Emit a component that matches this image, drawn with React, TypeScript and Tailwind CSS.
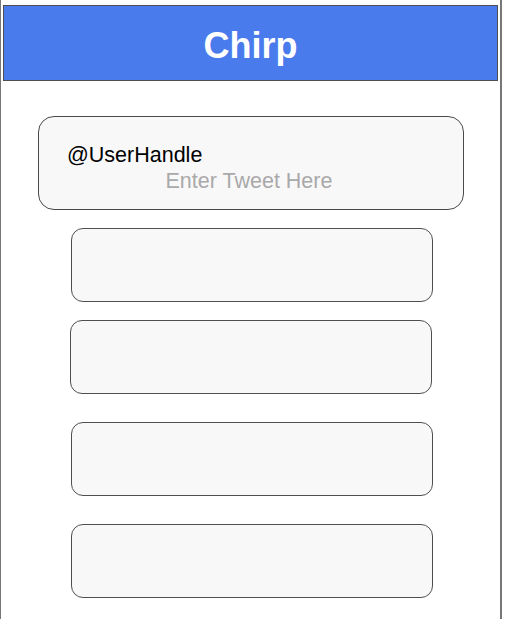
export default function App() {
  const cards = [
    { ml: "ml-[70px]", mt: "mt-[18px]" },
    { ml: "ml-[69px]", mt: "mt-[18px]" },
    { ml: "ml-[70px]", mt: "mt-[28px]" },
    { ml: "ml-[70px]", mt: "mt-[28px]" },
  ];
  return (
    <div
      className="w-[502px] h-[619px] bg-white border-l border-r-2 border-[#777777] overflow-hidden flex flex-col"
      style={{ fontFamily: '"Liberation Sans", Arial, sans-serif' }}
    >
      <div className="mt-[5px] ml-[2px] w-[495px] h-[76px] shrink-0 bg-[#4a7bec] border border-[#4f4f4f] flex items-center justify-center pt-[5px]">
        <span className="text-white font-bold text-[36px] leading-none">Chirp</span>
      </div>
      <div className="mt-[35px] ml-[37px] w-[426px] h-[94px] shrink-0 bg-[#f9f8f9] border border-[#4a4a4a] rounded-[16px] pt-[25px]">
        <div className="pl-[28px] text-[21.5px] leading-[26px] text-black">@UserHandle</div>
        <div className="pr-[4px] text-center text-[21.5px] leading-[26px] text-[#a9a9a9]">Enter Tweet Here</div>
      </div>
      {cards.map((c, i) => (
        <div
          key={i}
          className={`${c.ml} ${c.mt} w-[362px] h-[74px] shrink-0 bg-[#f9f8f9] border border-[#4f4f4f] rounded-[12px]`}
        />
      ))}
    </div>
  );
}
